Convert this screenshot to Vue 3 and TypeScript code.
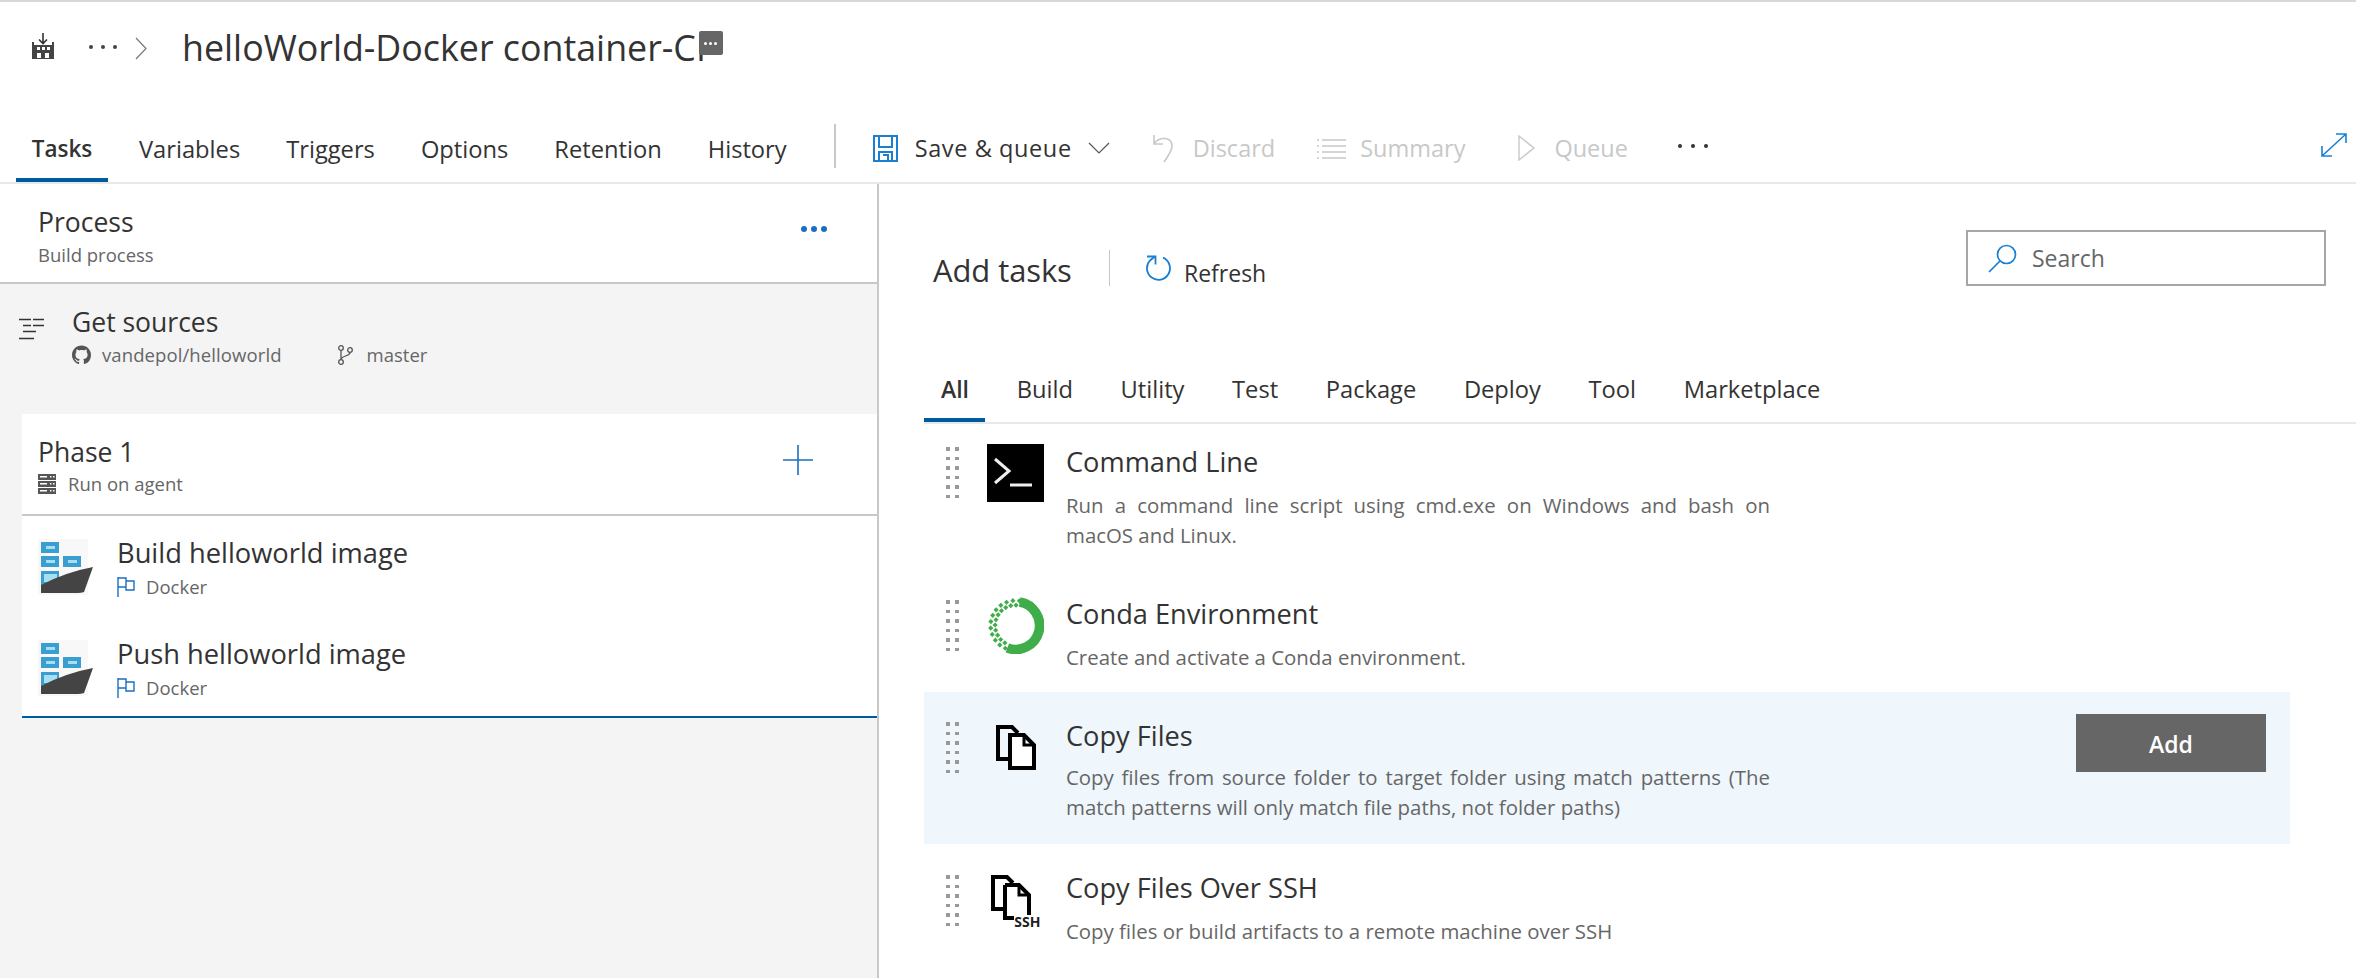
<script setup lang="ts">
interface Task { title: string; desc: string; icon: string; hl?: boolean }
const mainTabs = ['Tasks', 'Variables', 'Triggers', 'Options', 'Retention', 'History']
const addTabs = ['All', 'Build', 'Utility', 'Test', 'Package', 'Deploy', 'Tool', 'Marketplace']
const steps = ['Build helloworld image', 'Push helloworld image']
const tasks: Task[] = [
  { title: 'Command Line', desc: 'Run a command line script using cmd.exe on Windows and bash on macOS and Linux.', icon: 'cmd' },
  { title: 'Conda Environment', desc: 'Create and activate a Conda environment.', icon: 'conda' },
  { title: 'Copy Files', desc: 'Copy files from source folder to target folder using match patterns (The match patterns will only match file paths, not folder paths)', icon: 'copy', hl: true },
  { title: 'Copy Files Over SSH', desc: 'Copy files or build artifacts to a remote machine over SSH', icon: 'ssh' }
]
const dots = Array.from({ length: 12 })
const lattice: { x: number; y: number }[] = []
for (let a = 114; a <= 280; a += 15) {
  const rad = (a * Math.PI) / 180
  lattice.push({ x: 28 + 24.5 * Math.cos(rad), y: 28 + 24.5 * Math.sin(rad) })
  const rad2 = ((a + 7.5) * Math.PI) / 180
  if (a < 276) lattice.push({ x: 28 + 20 * Math.cos(rad2), y: 28 + 20 * Math.sin(rad2) })
}
</script>

<template>
  <div class="page">
    <header class="titlebar">
      <svg class="crumb-icon" width="22" height="27" viewBox="0 0 22 27">
        <path d="M11 0v10M7 6.500l4 4 4-4" fill="none" stroke="#333" stroke-width="1.600" />
        <path d="M0 9h2v3h18V9h2v17H0z" fill="#444" />
        <path d="M5 14h3v3H5zM10 14h3v3h-3zM15 14h3v3h-3zM5 20h4v5H5zM13 20h4v5h-4z" fill="#fff" />
      </svg>
      <span class="crumb-dots"><i></i><i></i><i></i></span>
      <svg class="crumb-chev" width="12" height="23" viewBox="0 0 12 23"><path d="M1 1l10 10.500L1 22" fill="none" stroke="#777" stroke-width="1.200" /></svg>
      <h1 class="title">helloWorld-Docker container-CI<span class="badge"><i></i><i></i><i></i></span></h1>
    </header>

    <nav class="toolbar">
      <div class="main-tabs">
        <span v-for="(t, i) in mainTabs" :key="t" class="main-tab" :class="{ active: i === 0 }">{{ t }}</span>
      </div>
      <span class="tool-sep"></span>
      <span class="cmd save">
        <svg width="25" height="27" viewBox="0 0 25 27"><path d="M1 1h23v25H1z M6 1v11h13V1 M6 26v-9h13v9 M10 20h5v6" fill="none" stroke="#1b7fd1" stroke-width="2" /></svg>
        <span class="cmd-text">Save &amp; queue</span>
        <svg class="chev" width="22" height="12" viewBox="0 0 22 12"><path d="M1 1l10 10L21 1" fill="none" stroke="#555" stroke-width="1.200" /></svg>
      </span>
      <span class="cmd off discard">
        <svg width="22" height="29" viewBox="0 0 22 29"><path d="M2 1v9h9M2 9.500C8 2 20 3 20 12c0 5-4 10-8 16" fill="none" stroke="#c8c8c8" stroke-width="1.600" /></svg>
        <span class="cmd-text">Discard</span>
      </span>
      <span class="cmd off summary">
        <svg width="29" height="21" viewBox="0 0 29 21"><path d="M5 2h24M5 8h24M5 14h24M5 20h24" stroke="#c8c8c8" stroke-width="1.500" /><path d="M0 2h2M0 8h2M0 14h2M0 20h2" stroke="#c8c8c8" stroke-width="1.500" /></svg>
        <span class="cmd-text">Summary</span>
      </span>
      <span class="cmd off queue">
        <svg width="18" height="26" viewBox="0 0 18 26"><path d="M1 1l15 12L1 25z" fill="none" stroke="#c8c8c8" stroke-width="1.400" /></svg>
        <span class="cmd-text">Queue</span>
      </span>
      <span class="more-dots"><i></i><i></i><i></i></span>
      <svg class="expand" width="28" height="26" viewBox="0 0 28 26"><path d="M2 24L26 2M16 2h10v9M2 14v10h10" fill="none" stroke="#1b7fd1" stroke-width="1.600" /></svg>
    </nav>

    <main class="body">
      <aside class="left">
        <section class="process">
          <div>
            <div class="process-title">Process</div>
            <div class="process-sub">Build process</div>
          </div>
          <span class="blue-dots"><i></i><i></i><i></i></span>
        </section>
        <section class="sources">
          <svg class="src-icon" width="26" height="22" viewBox="0 0 26 22">
            <path d="M0 1.500h12M14 1.500h11M4 7.500h8M14 7.500h11M4 13.500h13M0 20.500h15" stroke="#333" stroke-width="1.700" />
          </svg>
          <div>
            <div class="src-title">Get sources</div>
            <div class="src-meta">
              <svg width="19" height="20" viewBox="0 0 16 16"><path fill="#555" d="M8 0C3.580 0 0 3.580 0 8c0 3.540 2.290 6.530 5.470 7.590.4.070.55-.17.55-.38 0-.19-.01-.82-.01-1.490-2.010.37-2.530-.49-2.690-.94-.09-.23-.48-.94-.82-1.130-.28-.15-.68-.52-.01-.53.630-.01 1.080.58 1.230.82.720 1.210 1.870.87 2.330.66.070-.52.280-.87.510-1.070-1.780-.2-3.640-.89-3.640-3.950 0-.87.310-1.590.820-2.150-.08-.2-.36-1.020.08-2.120 0 0 .67-.21 2.200.82.640-.18 1.320-.27 2-.27s1.360.09 2 .27c1.530-1.040 2.200-.82 2.200-.82.440 1.100.16 1.920.08 2.120.51.560.82 1.270.82 2.150 0 3.070-1.870 3.750-3.650 3.950.29.250.54.730.54 1.480 0 1.070-.01 1.930-.01 2.200 0 .21.150.46.550.38A8.010 8.010 0 0 0 16 8c0-4.420-3.580-8-8-8z"/></svg>
              <span class="repo">vandepol/helloworld</span>
              <svg class="branch" width="17" height="20" viewBox="0 0 17 20"><g fill="none" stroke="#555" stroke-width="1.300"><circle cx="4" cy="3" r="2.300"/><circle cx="4" cy="17" r="2.300"/><circle cx="13" cy="5" r="2.300"/><path d="M4 5.500v9M13 7.500c0 4-9 3-9 7"/></g></svg>
              <span>master</span>
            </div>
          </div>
        </section>
        <section class="phase">
          <div class="phase-head">
            <div>
              <div class="phase-title">Phase 1</div>
              <div class="phase-sub">
                <svg width="18" height="20" viewBox="0 0 18 20"><path fill="#555" d="M0 0h18v6H0zM0 7h18v6H0zM0 14h18v6H0z"/><path fill="#fff" d="M2 2h7v1.500H2zM2 9h7v1.500H2zM2 16h7v1.500H2zM12 2h1.500v1.500H12zM15 2h1.500v1.500H15zM12 9h1.500v1.500H12zM15 9h1.500v1.500H15zM12 16h1.500v1.500H12zM15 16h1.500v1.500H15z"/></svg>
                <span>Run on agent</span>
              </div>
            </div>
            <svg class="plus" width="30" height="30" viewBox="0 0 30 30"><path d="M15 0v30M0 15h30" stroke="#1b6fc2" stroke-width="1.600" /></svg>
          </div>
          <div class="steps">
            <div v-for="s in steps" :key="s" class="step">
              <svg width="56" height="58" viewBox="0 0 56 58">
                <rect width="50" height="56" y="1" fill="#f8f8f8" />
                <g fill="#3a9fd0">
                  <rect x="3" y="4" width="18" height="11" /><rect x="3" y="18" width="18" height="11" /><rect x="25" y="18" width="18" height="11" /><rect x="3" y="33" width="18" height="14" />
                </g>
                <g fill="#a6dff0">
                  <rect x="8" y="8" width="9" height="3" /><rect x="8" y="22" width="9" height="3" /><rect x="30" y="22" width="9" height="3" /><rect x="6" y="36" width="13" height="8" />
                </g>
                <path d="M3 47Q28 34 55 29L46 54Q43 55 40 55H3z" fill="#444" />
              </svg>
              <div>
                <div class="step-title">{{ s }}</div>
                <div class="step-sub">
                  <svg width="18" height="20" viewBox="0 0 18 20"><path d="M1 0v20M1 1h8v3h8v9H9v-3H1M9 1v9" fill="none" stroke="#1b6fc2" stroke-width="1.400" /></svg>
                  <span>Docker</span>
                </div>
              </div>
            </div>
          </div>
        </section>
      </aside>

      <section class="right">
        <div class="add-head">
          <span class="add-title">Add tasks</span>
          <span class="add-sep"></span>
          <svg class="refresh-icon" width="26" height="26" viewBox="0 0 26 26"><path d="M18 2.700A11.500 11.500 0 1 1 5 5.500L10 1.500" fill="none" stroke="#1b7fd1" stroke-width="1.800" /><path d="M2 1.500h8.500V9.500" fill="none" stroke="#1b7fd1" stroke-width="1.800" /></svg>
          <span class="refresh">Refresh</span>
          <div class="search">
            <svg width="29" height="29" viewBox="0 0 29 29"><circle cx="18.500" cy="10.500" r="9" fill="none" stroke="#1b7fd1" stroke-width="1.700" /><path d="M12 17L1 28" stroke="#1b7fd1" stroke-width="1.700" /></svg>
            <span>Search</span>
          </div>
        </div>
        <div class="add-tabs">
          <span v-for="(t, i) in addTabs" :key="t" class="add-tab" :class="{ active: i === 0 }">{{ t }}</span>
        </div>
        <div class="tasks">
          <article v-for="t in tasks" :key="t.title" class="task" :class="['task-' + t.icon, { hl: t.hl }]">
            <div class="handle"><i v-for="(_, d) in dots" :key="d"></i></div>
            <div class="task-icon">
              <svg v-if="t.icon === 'cmd'" width="57" height="58" viewBox="0 0 57 58">
                <rect width="57" height="58" fill="#000" />
                <path d="M8 15l14 12L8 39" fill="none" stroke="#eee" stroke-width="3" />
                <path d="M23 41h22" stroke="#eee" stroke-width="3" />
              </svg>
              <svg v-else-if="t.icon === 'conda'" width="57" height="57" viewBox="0 0 56 56">
                <path d="M32.100 4.900A23.500 23.500 0 1 1 20 50.100" fill="none" stroke="#3fae4a" stroke-width="9.500" />
                <g fill="#3fae4a">
                  <rect v-for="(p, k) in lattice" :key="k" :x="p.x - 1.800" :y="p.y - 1.800" width="3.600" height="3.600" :transform="`rotate(45 ${p.x} ${p.y})`" />
                </g>
              </svg>
              <svg v-else-if="t.icon === 'copy'" width="40" height="45" viewBox="0 0 40 45">
                <path d="M14 34H2V2h14l6 6" fill="none" stroke="#000" stroke-width="4" />
                <path d="M14 10h14l10 10v23H14z" fill="#fff" stroke="#000" stroke-width="4" />
                <path d="M28 10v10h10" fill="none" stroke="#000" stroke-width="3" />
              </svg>
              <span v-else class="ssh-wrap">
                <svg width="40" height="45" viewBox="0 0 40 45">
                  <path d="M14 34H2V2h14l6 6" fill="none" stroke="#000" stroke-width="4" />
                  <path d="M14 10h14l10 10v23" fill="none" stroke="#000" stroke-width="4" />
                  <path d="M14 10v33h11" fill="none" stroke="#000" stroke-width="4" />
                  <path d="M28 10v10h10" fill="none" stroke="#000" stroke-width="3" />
                </svg>
                <b>SSH</b>
              </span>
            </div>
            <div class="task-body">
              <div class="task-title">{{ t.title }}</div>
              <p class="task-desc">{{ t.desc }}</p>
            </div>
            <button v-if="t.hl" class="add-btn">Add</button>
          </article>
        </div>
      </section>
    </main>
  </div>
</template>

<style>
html, body { margin: 0; background: #fff; }
</style>

<style scoped>
.page {
  width: 2356px; height: 978px; overflow: hidden; background: #fff; color: #333;
  font-family: "Open Sans", "Noto Sans", sans-serif; border-top: 2px solid #d8d8d8; box-sizing: border-box;
  display: flex; flex-direction: column;
}
i { display: block; }
.titlebar { height: 80px; display: flex; align-items: center; padding: 0 0 0 32px; box-sizing: border-box; flex: none; }
.crumb-icon { margin-top: 8px; }
.crumb-dots { display: flex; gap: 8px; margin-left: 35px; margin-top: 10px; }
.crumb-dots i { width: 4px; height: 4px; border-radius: 50%; background: #444; }
.crumb-chev { margin-left: 18px; margin-top: 12px; }
.title { position: relative; margin: 10px 0 0 35px; font-size: 35.800px; font-weight: 400; line-height: 48px; color: #333; white-space: nowrap; }
.badge { position: absolute; right: -17px; top: 8px; width: 24px; height: 24px; border-radius: 2px; background: #666; display: flex; align-items: center; justify-content: center; gap: 2px; }
.badge i { width: 3px; height: 3px; background: #fff; border-radius: 50%; }
.toolbar { position: relative; height: 102px; flex: none; box-sizing: border-box; border-bottom: 2px solid #e8e8e8; display: flex; align-items: flex-start; }
.main-tabs { display: flex; padding-left: 16px; height: 100px; }
.main-tab { font-size: 23.700px; padding: 52px 15px 0 16px; height: 100px; box-sizing: border-box; line-height: 30px; margin-right: 15px; }
.main-tab.active { font-weight: 600; font-size: 22.500px; width: 92px; padding: 52px 0 0; text-align: center; border-bottom: 4px solid #005a9e; }
.tool-sep { width: 2px; height: 44px; margin: 42px 0 0 17px; background: #c8c8c8; }
.cmd { display: flex; align-items: center; height: 40px; margin-top: 46px; font-size: 23.500px; }
.cmd.off { color: #c8c8c8; }
.save { margin-left: 37px; }
.save .cmd-text { margin-left: 17px; letter-spacing: 0.6px; }
.chev { margin-left: 16px; }
.discard { margin-left: 42px; }
.discard .cmd-text { margin-left: 19px; }
.summary { margin-left: 42px; }
.summary .cmd-text { margin-left: 14px; }
.queue { margin-left: 53px; }
.queue .cmd-text { margin-left: 18px; }
.more-dots { display: flex; gap: 9px; margin: 62px 0 0 50px; }
.more-dots i { width: 4px; height: 4px; border-radius: 50%; background: #333; }
.expand { position: absolute; right: 8px; top: 50px; }
.body { flex: 1; display: flex; min-height: 0; }
.left { width: 879px; flex: none; box-sizing: border-box; background: #f4f4f4; border-right: 2px solid #c8c8c8; }
.process { height: 100px; box-sizing: border-box; background: #fff; border-bottom: 2px solid #c8c8c8; padding: 20px 50px 0 38px; display: flex; justify-content: space-between; }
.process-title { font-size: 26.500px; line-height: 36px; }
.process-sub { font-size: 18.500px; line-height: 26px; color: #666; margin-top: 2px; }
.blue-dots { display: flex; gap: 4px; margin-top: 22px; }
.blue-dots i { width: 6px; height: 6px; border-radius: 50%; background: #1b6fc2; }
.sources { height: 130px; box-sizing: border-box; padding: 20px 0 0 19px; display: flex; }
.src-icon { margin-top: 14px; margin-right: 27px; }
.src-title { font-size: 26.500px; line-height: 38px; margin-top: -1px; }
.src-meta { display: flex; align-items: center; gap: 11px; font-size: 18.500px; line-height: 26px; color: #666; margin-top: 1px; }
.repo { margin-right: 44px; letter-spacing: 0.1px; }
.branch { margin-right: 2px; }
.phase { margin-left: 22px; background: #fff; height: 304px; box-sizing: border-box; border-bottom: 2px solid #005a9e; }
.phase-head { height: 102px; box-sizing: border-box; border-bottom: 2px solid #c8c8c8; padding: 20px 64px 0 16px; display: flex; justify-content: space-between; }
.phase-title { font-size: 26.500px; line-height: 36px; }
.phase-sub { display: flex; align-items: center; gap: 12px; font-size: 18.500px; line-height: 26px; color: #666; margin-top: 1px; }
.plus { margin-top: 11px; }
.steps { padding-top: 22px; display: flex; flex-direction: column; gap: 43px; }
.step { display: flex; gap: 23px; padding-left: 16px; height: 58px; }
.step-title { font-size: 27.300px; line-height: 34px; margin-top: -2px; }
.step-sub { display: flex; align-items: center; gap: 11px; font-size: 18.500px; line-height: 26px; color: #666; margin-top: 4px; }
.right { flex: 1; min-width: 0; position: relative; }
.add-head { height: 136px; display: flex; align-items: flex-start; padding-left: 54px; box-sizing: border-box; }
.add-title { font-size: 31px; line-height: 40px; margin-top: 66px; letter-spacing: -0.1px; width: 139px; white-space: nowrap; }
.add-sep { width: 1px; height: 36px; background: #c8c8c8; margin: 66px 0 0 37px; }
.refresh-icon { margin: 71px 0 0 35px; }
.refresh { font-size: 23px; line-height: 30px; margin: 74px 0 0 13px; }
.search { position: absolute; left: 1087px; top: 46px; width: 360px; height: 56px; box-sizing: border-box; border: 2px solid #a6a6a6; display: flex; align-items: center; gap: 15px; padding-left: 20px; font-size: 23px; color: #666; }
.add-tabs { display: flex; margin-left: 45px; height: 104px; box-sizing: border-box; border-bottom: 2px solid #e8e8e8; align-items: flex-end; }
.add-tab { font-size: 23.700px; line-height: 30px; padding: 2px 16px 0 17px; margin-right: 14.600px; height: 50px; box-sizing: border-box; white-space: nowrap; }
.add-tab.active { font-weight: 600; font-size: 23px; border-bottom: 4px solid #005a9e; }
.tasks { margin-left: 45px; width: 1366px; }
.task { position: relative; box-sizing: border-box; display: flex; }
.task-cmd { height: 150px; padding-top: 20px; }
.task-conda { height: 118px; padding-top: 20px; }
.task-copy { height: 152px; padding-top: 26px; }
.task-ssh { height: 120px; padding-top: 27px; }
.task.hl { background: #eff6fc; }
.handle { width: 12px; margin: 3px 0 0 22px; display: grid; grid-template-columns: 3px 3px; column-gap: 6px; row-gap: 6px; align-content: start; flex: none; height: 51px; }
.task-conda .handle { margin-top: 6px; }
.task-copy .handle, .task-ssh .handle { margin-top: 4px; }
.handle i { width: 4px; height: 3.500px; background: #999; }
.task-icon { width: 57px; height: 58px; margin-left: 29px; flex: none; display: flex; align-items: center; justify-content: center; }
.task-conda .task-icon { margin-top: 2px; }
.ssh-wrap { position: relative; display: block; width: 50px; height: 54px; margin-top: 4px; }
.ssh-wrap svg { display: block; }
.ssh-wrap b { position: absolute; right: 0; bottom: 0; font: 700 14px/14px "Open Sans", sans-serif; color: #222; background: #fff; }
.task-body { margin-left: 22px; width: 704px; flex: none; }
.task-title { font-size: 27.200px; line-height: 36px; }
.task-desc { margin: 10px 0 0; font-size: 20.400px; line-height: 30px; color: #666; text-align: justify; }
.task-conda .task-title { margin-top: 2px; }
.task-copy .task-desc { margin-top: 8px; }
.task-ssh .task-title { margin-top: -1px; }
.add-btn { position: absolute; left: 1152px; top: 22px; width: 190px; height: 58px; padding-top: 3px; background: #666; border: 0; color: #fff; font: 600 23px "Open Sans", sans-serif; }
</style>
